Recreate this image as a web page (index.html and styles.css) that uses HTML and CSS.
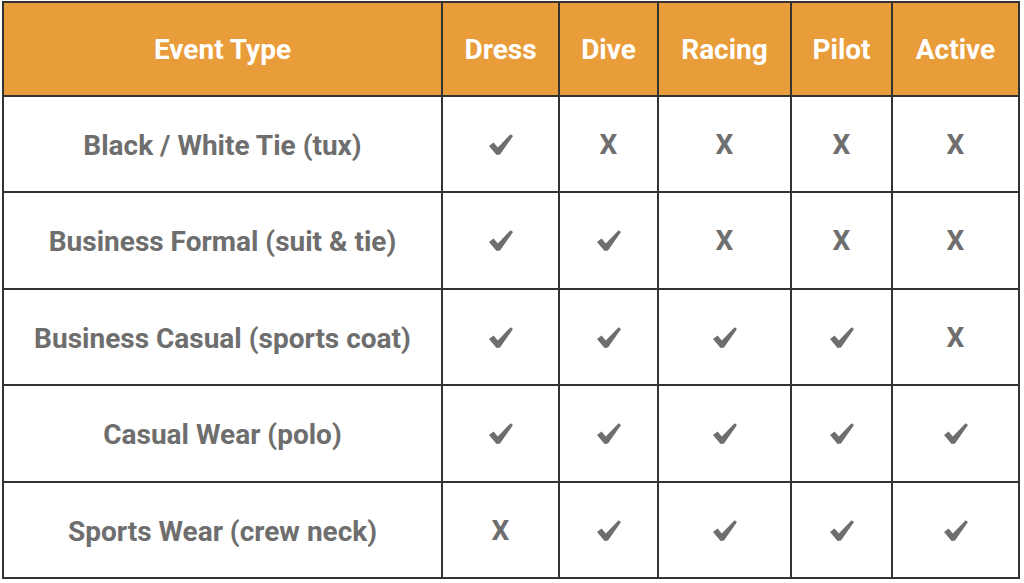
FILE: index.html
```html
<!DOCTYPE html>
<html>
<head>
<meta charset="utf-8">
<link rel="stylesheet" href="styles.css">
</head>
<body>
<svg width="0" height="0" class="defs">
  <defs>
    <symbol id="ck" viewBox="0 0 24 21">
      <path d="M0 12 L4.6 8.6 L8.8 13.4 L21.6 0.2 L24 2.1 L11 20.6 L7.6 20.9 Z"/>
    </symbol>
  </defs>
</svg>
<div class="grid">
  <div class="cell head">Event Type</div>
  <div class="cell head">Dress</div>
  <div class="cell head">Dive</div>
  <div class="cell head">Racing</div>
  <div class="cell head">Pilot</div>
  <div class="cell head">Active</div>

  <div class="cell label">Black / White Tie (tux)</div>
  <div class="cell"><svg class="ck"><use href="#ck"/></svg></div>
  <div class="cell">X</div>
  <div class="cell">X</div>
  <div class="cell">X</div>
  <div class="cell">X</div>

  <div class="cell label">Business Formal (suit &amp; tie)</div>
  <div class="cell"><svg class="ck"><use href="#ck"/></svg></div>
  <div class="cell"><svg class="ck"><use href="#ck"/></svg></div>
  <div class="cell">X</div>
  <div class="cell">X</div>
  <div class="cell">X</div>

  <div class="cell label">Business Casual (sports coat)</div>
  <div class="cell"><svg class="ck"><use href="#ck"/></svg></div>
  <div class="cell"><svg class="ck"><use href="#ck"/></svg></div>
  <div class="cell"><svg class="ck"><use href="#ck"/></svg></div>
  <div class="cell"><svg class="ck"><use href="#ck"/></svg></div>
  <div class="cell">X</div>

  <div class="cell label">Casual Wear (polo)</div>
  <div class="cell"><svg class="ck"><use href="#ck"/></svg></div>
  <div class="cell"><svg class="ck"><use href="#ck"/></svg></div>
  <div class="cell"><svg class="ck"><use href="#ck"/></svg></div>
  <div class="cell"><svg class="ck"><use href="#ck"/></svg></div>
  <div class="cell"><svg class="ck"><use href="#ck"/></svg></div>

  <div class="cell label">Sports Wear (crew neck)</div>
  <div class="cell">X</div>
  <div class="cell"><svg class="ck"><use href="#ck"/></svg></div>
  <div class="cell"><svg class="ck"><use href="#ck"/></svg></div>
  <div class="cell"><svg class="ck"><use href="#ck"/></svg></div>
  <div class="cell"><svg class="ck"><use href="#ck"/></svg></div>
</div>
</body>
</html>
```
FILE: styles.css
```css
html, body {
  margin: 0;
  padding: 0;
  background: #ffffff;
}
body {
  padding: 1px 0 0 2px;
}
.defs {
  position: absolute;
  width: 0;
  height: 0;
  overflow: hidden;
}
.grid {
  display: grid;
  grid-template-columns: 437px 115px 97px 131px 99px 125px;
  grid-template-rows: 92px 94px 95px 94px 95px 94px;
  gap: 2px;
  padding: 2px;
  width: 1014px;
  background: #333333;
  font-family: Roboto, "Liberation Sans", sans-serif;
  font-weight: 700;
  font-size: 28px;
  color: #6e6e6e;
}
.cell {
  background: #ffffff;
  display: flex;
  align-items: center;
  justify-content: center;
  white-space: nowrap;
}
.label {
  padding-top: 2px;
}
.head {
  background: #e89c3a;
  color: #ffffff;
}
.ck {
  width: 24px;
  height: 21px;
  fill: #6e6e6e;
  margin-left: 1px;
}
```
